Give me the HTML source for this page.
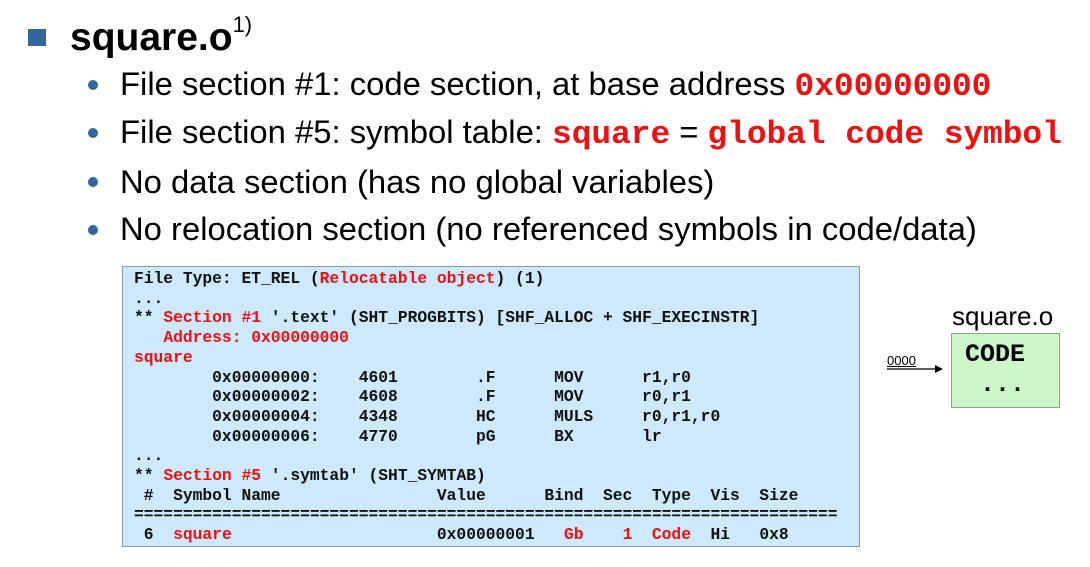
<!DOCTYPE html>
<html><head><meta charset="utf-8"><style>
body{margin:0;width:1090px;height:567px;background:#fff;position:relative;overflow:hidden;font-family:"Liberation Sans",sans-serif}
.a{position:absolute;white-space:nowrap}
.sq{left:28px;top:29px;width:18px;height:17px;background:#336699}
.title{left:70px;top:16px;font-size:39px;font-weight:bold;color:#000}
.title sup{font-size:22px;font-weight:normal;position:relative;top:-4px}
.dot{width:10px;height:10px;border-radius:50%;background:#336699}
.li{left:120px;font-size:32.8px;color:#000}
.r{color:#ee1111;font-family:"Liberation Mono",monospace;font-weight:bold;font-size:32.8px}
.box{left:122px;top:266px;width:736px;height:279px;background:#cde9fb;border:1px solid #8a9aa8}
pre{margin:0;position:absolute;left:134px;top:269px;font-family:"Liberation Mono",monospace;font-weight:bold;font-size:16.3px;line-height:19.7px;color:#111}
pre .c{color:#ee1111}
.g{left:951px;top:333px;width:107px;height:73px;background:#ccf5c8;border:1px solid #999}
</style></head><body>
<div class="a sq"></div>
<div class="a title">square.o<sup>1)</sup></div>
<div class="a dot" style="left:88px;top:80px"></div>
<div class="a li" style="top:65px">File section #1: code section, at base address <span class="r">0x00000000</span></div>
<div class="a dot" style="left:88px;top:128px"></div>
<div class="a li" style="top:113px">File section #5: symbol table: <span class="r">square</span> = <span class="r">global code symbol</span></div>
<div class="a dot" style="left:88px;top:177px"></div>
<div class="a li" style="top:163px">No data section (has no global variables)</div>
<div class="a dot" style="left:88px;top:225px"></div>
<div class="a li" style="top:210px">No relocation section (no referenced symbols in code/data)</div>
<div class="a box"></div>
<pre>File Type: ET_REL (<span class="c">Relocatable object</span>) (1)
...
** <span class="c">Section #1</span> '.text' (SHT_PROGBITS) [SHF_ALLOC + SHF_EXECINSTR]
   <span class="c">Address: 0x00000000</span>
<span class="c">square</span>
        0x00000000:    4601        .F      MOV      r1,r0
        0x00000002:    4608        .F      MOV      r0,r1
        0x00000004:    4348        HC      MULS     r0,r1,r0
        0x00000006:    4770        pG      BX       lr
...
** <span class="c">Section #5</span> '.symtab' (SHT_SYMTAB)
 #  Symbol Name                Value      Bind  Sec  Type  Vis  Size
========================================================================
 6  <span class="c">square</span>                     0x00000001   <span class="c">Gb</span>    <span class="c">1</span>  <span class="c">Code</span>  Hi   0x8</pre>
<div class="a" style="left:952px;top:301px;font-size:26px">square.o</div>
<div class="a g"></div>
<div class="a" style="left:965px;top:340px;font-family:'Liberation Mono',monospace;font-weight:bold;font-size:25px">CODE</div>
<div class="a" style="left:980px;top:370px;font-family:'Liberation Mono',monospace;font-weight:bold;font-size:25px">...</div>
<div class="a" style="left:887px;top:353px;font-size:13px;text-decoration:underline">0000</div>
<svg class="a" style="left:885px;top:363px" width="60" height="12"><line x1="2" y1="6" x2="52" y2="6" stroke="#000" stroke-width="1.3"/><path d="M50 2 L58 6 L50 10 Z" fill="#000"/></svg>
</body></html>
